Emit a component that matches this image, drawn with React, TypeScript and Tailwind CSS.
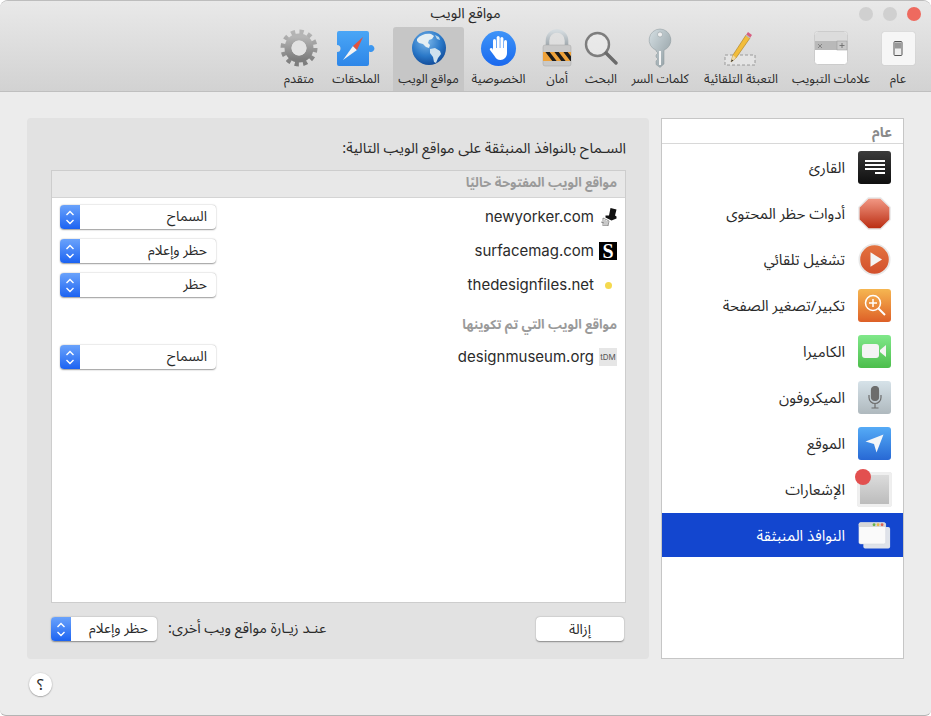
import type { ReactNode } from 'react';

const arabicFont = "font-['Noto_Sans_Arabic','DejaVu_Sans','Noto_Sans',sans-serif]";

function GeneralIcon() {
    return (
        <div className="flex h-[33px] w-[33px] items-center justify-center rounded-[2px] bg-[#f6f6f6] shadow-[0_0_1px_#aaa]">
            <svg width="10" height="15" viewBox="0 0 10 15">
                <rect x="1" y="0.5" width="8" height="14" rx="1" fill="#eee" stroke="#555" />
                <rect x="2" y="1.5" width="6" height="6" fill="#999" />
            </svg>
        </div>
    );
}

function TabsIcon() {
    return (
        <svg width="34" height="34" viewBox="0 0 34 34">
            <rect x="0.5" y="0.5" width="33" height="33" rx="3" fill="#fff" stroke="#ccc" />
            <path d="M1 4a3 3 0 0 1 3-3h26a3 3 0 0 1 3 3v7H1z" fill="#dcdcdc" />
            <rect x="1" y="10" width="32" height="9" fill="#b9b9b9" />
            <rect x="23" y="10" width="10" height="9" fill="#c9c9c9" stroke="#999" strokeWidth="0.5" />
            <path d="M4 13l4 4M8 13l-4 4" stroke="#777" strokeWidth="0.8" />
            <path d="M28 12v5M25.5 14.5h5" stroke="#666" strokeWidth="0.8" />
        </svg>
    );
}

function PencilIcon() {
    return (
        <svg width="34" height="38" viewBox="0 0 34 38">
            <rect x="1" y="26" width="30" height="10" fill="#e4e4e4" stroke="#888" strokeWidth="0.8" strokeDasharray="3 2" />
            <path d="M7 33l2-7L22 6l4 3L12 29z" fill="#f2bd3a" stroke="#a87a1c" strokeWidth="0.6" />
            <path d="M7 33l2-7 3 3z" fill="#eed9a8" />
            <path d="M7 33l.7-2.4 1.7 1z" fill="#333" />
            <path d="M22 6l2-3 4 3-2 3z" fill="#d85f80" />
            <path d="M22 6l4 3" stroke="#bbb" strokeWidth="1.5" />
        </svg>
    );
}

function KeyIcon() {
    return (
        <svg width="24" height="40" viewBox="0 0 24 40">
            <defs>
                <linearGradient id="keyFill" x1="0" y1="0" x2="1" y2="1">
                    <stop offset="0" stopColor="#d5dfe3" />
                    <stop offset="1" stopColor="#8d9a9f" />
                </linearGradient>
            </defs>
            <path d="M12 1a11 11 0 0 1 4 21.2V36l-4 3.5-4-3V33l2-2-2-2v-2l2-2-2-2v-.8A11 11 0 0 1 12 1z" fill="url(#keyFill)" stroke="#8b979b" strokeWidth="0.5" />
            <circle cx="12" cy="6.5" r="2.5" fill="#f0f0f0" stroke="#8b979b" strokeWidth="0.5" />
            <path d="M12 23v14" stroke="#f5f5f5" strokeWidth="2" />
        </svg>
    );
}

function SearchIcon() {
    return (
        <svg width="34" height="34" viewBox="0 0 34 34">
            <circle cx="13.5" cy="13.5" r="11.5" fill="#f0f0f0" fillOpacity="0.55" stroke="#7d7d7d" strokeWidth="2.4" />
            <path d="M22 22l10 10" stroke="#6b6b6b" strokeWidth="3.4" strokeLinecap="round" />
        </svg>
    );
}

function LockIcon() {
    return (
        <svg width="30" height="38" viewBox="0 0 30 38">
            <defs>
                <linearGradient id="shackle" x1="0" y1="0" x2="0" y2="1">
                    <stop offset="0" stopColor="#d4dbdf" />
                    <stop offset="1" stopColor="#9aa3a8" />
                </linearGradient>
                <clipPath id="lockBand">
                    <rect x="1" y="23" width="28" height="9" />
                </clipPath>
            </defs>
            <path d="M5.5 18v-6.5a9.5 9.5 0 0 1 19 0V18" fill="none" stroke="url(#shackle)" strokeWidth="3.6" />
            <rect x="1" y="16" width="28" height="21" rx="2" fill="#c9c9c9" stroke="#a5a5a5" strokeWidth="0.5" />
            <rect x="1" y="23" width="28" height="9" fill="#eea23a" />
            <g clipPath="url(#lockBand)" stroke="#1c1c1c" strokeWidth="3.4">
                <path d="M4 21l10 13M13 21l10 13M22 21l10 13" />
            </g>
        </svg>
    );
}

function HandIcon() {
    return (
        <div className="flex h-[35px] w-[35px] items-center justify-center rounded-full bg-linear-to-b from-[#3f94f8] to-[#1a68ee]">
            <svg width="22" height="26" viewBox="0 0 22 26" fill="#fff">
                <rect x="5" y="4" width="3" height="12" rx="1.5" />
                <rect x="8.7" y="1" width="3" height="14" rx="1.5" />
                <rect x="12.4" y="2" width="3" height="13" rx="1.5" />
                <rect x="16" y="5" width="3" height="11" rx="1.5" />
                <path d="M5 13h14v5c0 4-3 7-6.500 7-3 0-4.500-1.500-6-4l-4.500-6c-1-1.500 1-3 2.500-1.500L5 15.500z" />
            </svg>
        </div>
    );
}

function GlobeIcon() {
    return (
        <svg width="36" height="36" viewBox="0 0 36 36">
            <defs>
                <radialGradient id="globeFill" cx="0.42" cy="0.3" r="0.8">
                    <stop offset="0" stopColor="#7db8ea" />
                    <stop offset="0.55" stopColor="#2a78c8" />
                    <stop offset="1" stopColor="#0b3f8c" />
                </radialGradient>
            </defs>
            <circle cx="18" cy="18" r="17" fill="url(#globeFill)" />
            <path d="M6 9c3-4 9-6 14-5l3 2-2 3-3 1-1 3 2 2-1 3-3-1-3-3-4-1-2-2z" fill="#e4eef3" />
            <path d="M19 19l5-1 5 3 1 3-3 4-2 5-2-1-1-5-3-4z" fill="#cfe2ee" />
            <path d="M24 5l4 2 1 3-3-1z" fill="#bcd8ea" />
        </svg>
    );
}

function PuzzleIcon() {
    return (
        <svg width="39" height="35" viewBox="0 0 39 35">
            <defs>
                <linearGradient id="puzzleFill" x1="0" y1="0" x2="0" y2="1">
                    <stop offset="0" stopColor="#4aa6f6" />
                    <stop offset="1" stopColor="#2d86e8" />
                </linearGradient>
            </defs>
            <path d="M2 0h28a2 2 0 0 1 2 2v12.500a3.500 3.500 0 1 1 0 6V33a2 2 0 0 1-2 2H2a2 2 0 0 1-2-2V21a3.500 3.500 0 1 0 0-7V2a2 2 0 0 1 2-2z" fill="url(#puzzleFill)" />
            <path d="M6 29l10-14 4 4z" fill="#f4f4f4" />
            <path d="M26 6L16 15l4 4z" fill="#e2533f" />
        </svg>
    );
}

function GearIcon() {
    return (
        <svg width="38" height="38" viewBox="0 0 38 38">
            <defs>
                <linearGradient id="gearFill" x1="0" y1="0" x2="0" y2="1">
                    <stop offset="0" stopColor="#b5b5b5" />
                    <stop offset="1" stopColor="#7d7d7d" />
                </linearGradient>
            </defs>
            <circle cx="19" cy="19" r="15.500" fill="none" stroke="url(#gearFill)" strokeWidth="6" strokeDasharray="4.050 4.060" />
            <circle cx="19" cy="19" r="11" fill="none" stroke="url(#gearFill)" strokeWidth="7" />
            <circle cx="19" cy="19" r="7.500" fill="#e2e2e2" />
        </svg>
    );
}

const toolbarItems: { label: string; width: string; icon: ReactNode; active?: boolean }[] = [
    { label: 'عام', width: 'w-[38px]', icon: <GeneralIcon /> },
    { label: 'علامات التبويب', width: 'w-[96px]', icon: <TabsIcon /> },
    { label: 'التعبئة التلقائية', width: 'w-[84px]', icon: <PencilIcon /> },
    { label: 'كلمات السر', width: 'w-[78px]', icon: <KeyIcon /> },
    { label: 'البحث', width: 'w-[40px]', icon: <SearchIcon /> },
    { label: 'أمان', width: 'w-[48px]', icon: <LockIcon /> },
    { label: 'الخصوصية', width: 'w-[69px]', icon: <HandIcon /> },
    { label: 'مواقع الويب', width: 'w-[71px]', icon: <GlobeIcon />, active: true },
    { label: 'الملحقات', width: 'w-[74px]', icon: <PuzzleIcon /> },
    { label: 'متقدم', width: 'w-[40px]', icon: <GearIcon /> },
];

function Tile({ className, children }: { className: string; children: ReactNode }) {
    return <div className={`flex h-[33px] w-[33px] items-center justify-center rounded-[3px] ${className}`}>{children}</div>;
}

const sidebarItems: { label: string; icon: ReactNode; active?: boolean }[] = [
    {
        label: 'القارئ',
        icon: (
            <Tile className="bg-linear-to-b from-[#3c3c3c] to-[#0f0f0f]">
                <svg width="20" height="15" viewBox="0 0 20 15" fill="#fff">
                    <rect width="20" height="2" />
                    <rect y="4" width="20" height="2" />
                    <rect y="8" width="20" height="2" />
                    <rect x="10" y="12" width="10" height="2" />
                </svg>
            </Tile>
        ),
    },
    {
        label: 'أدوات حظر المحتوى',
        icon: (
            <svg width="35" height="35" viewBox="0 0 35 35">
                <defs>
                    <linearGradient id="stopFill" x1="0" y1="0" x2="0" y2="1">
                        <stop offset="0" stopColor="#f39a86" />
                        <stop offset="1" stopColor="#b92b10" />
                    </linearGradient>
                </defs>
                <path d="M11 1h13l10 10v13L24 34H11L1 24V11z" fill="url(#stopFill)" stroke="#e8e8e8" strokeWidth="1.500" />
            </svg>
        ),
    },
    {
        label: 'تشغيل تلقائي',
        icon: (
            <svg width="37" height="37" viewBox="0 0 37 37">
                <defs>
                    <linearGradient id="playFill" x1="0" y1="0" x2="0" y2="1">
                        <stop offset="0" stopColor="#e4733f" />
                        <stop offset="1" stopColor="#d24f2c" />
                    </linearGradient>
                </defs>
                <circle cx="18.500" cy="18.500" r="17" fill="url(#playFill)" stroke="#e8e8e8" strokeWidth="2" />
                <path d="M14 10.500l13 8-13 8z" fill="#f4f4f4" />
            </svg>
        ),
    },
    {
        label: 'تكبير/تصغير الصفحة',
        icon: (
            <Tile className="bg-linear-to-b from-[#f5b651] to-[#dd5f27]">
                <svg width="22" height="22" viewBox="0 0 22 22" fill="none" stroke="#fff" strokeWidth="1.500">
                    <circle cx="9" cy="9" r="7.500" />
                    <path d="M9 5v8M5 9h8" />
                    <path d="M14.500 14.500L21 21" strokeWidth="2" />
                </svg>
            </Tile>
        ),
    },
    {
        label: 'الكاميرا',
        icon: (
            <Tile className="bg-linear-to-b from-[#80e88a] to-[#4cbe4b]">
                <svg width="25" height="14" viewBox="0 0 25 14" fill="#f4f4f4">
                    <rect width="17" height="14" rx="3" />
                    <path d="M18 6l6-5v12l-6-5z" />
                </svg>
            </Tile>
        ),
    },
    {
        label: 'الميكروفون',
        icon: (
            <Tile className="bg-linear-to-b from-[#d6e2e9] to-[#afb9be]">
                <svg width="14" height="23" viewBox="0 0 14 23" fill="none" stroke="#6d6d6d" strokeWidth="1.200">
                    <rect x="3.500" y="0.500" width="7" height="14" rx="3.500" fill="#6d6d6d" />
                    <path d="M1 9v2.500a6 6 0 0 0 12 0V9M7 17.500V22M3.500 22h7" />
                </svg>
            </Tile>
        ),
    },
    {
        label: 'الموقع',
        icon: (
            <Tile className="bg-linear-to-b from-[#56abf6] to-[#2868d4]">
                <svg width="19" height="19" viewBox="0 0 19 19" fill="#f4f6f8">
                    <path d="M18.500 0.500L11.500 18.500 9 10 0.500 7.500z" />
                </svg>
            </Tile>
        ),
    },
    {
        label: 'الإشعارات',
        icon: (
            <div className="relative flex h-[33px] w-[33px] items-center justify-center border-2 border-[#efefef] bg-linear-to-b from-[#dcdcdc] to-[#bcbcbc] shadow-[0_0_1px_#999]">
                <span className="absolute top-[-6px] left-[-5px] h-4 w-4 rounded-full bg-[#e2504f]" />
            </div>
        ),
    },
    {
        label: 'النوافذ المنبثقة',
        active: true,
        icon: (
            <svg width="37" height="31" viewBox="0 0 37 31">
                <rect x="6" y="6" width="30" height="24" rx="2" fill="#dfe3ea" />
                <rect x="1" y="1" width="30" height="24" rx="2" fill="#fafafa" stroke="#cfd3da" strokeWidth="0.500" />
                <path d="M1 3a2 2 0 0 1 2-2h26a2 2 0 0 1 2 2v3H1z" fill="#d8d8d8" />
                <circle cx="18" cy="3.500" r="1.600" fill="#66b34e" />
                <circle cx="22.500" cy="3.500" r="1.600" fill="#e8b84a" />
                <circle cx="27" cy="3.500" r="1.600" fill="#de6252" />
            </svg>
        ),
    },
];

function Stepper() {
    return (
        <span className="flex h-full w-5 shrink-0 items-center justify-center rounded-l-[4px] bg-linear-to-b from-[#6aa2fb] to-[#1b62f1]">
            <svg width="10" height="17" viewBox="0 0 10 17" fill="none" stroke="#fff" strokeWidth="1.400">
                <path d="M1.500 6L5 2.500 8.500 6M1.500 11L5 14.500 8.500 11" />
            </svg>
        </span>
    );
}

function Select({ value, className }: { value: string; className: string }) {
    return (
        <div className={`flex h-6 items-center rounded-[4px] bg-white shadow-[0_0.5px_1.500px_rgba(0,0,0,0.4)] ${className}`}>
            <span className="flex-1 pr-[9px] text-[14px] leading-none text-[#2a2a2a]">{value}</span>
            <Stepper />
        </div>
    );
}

function SiteRow({ favicon, site, value }: { favicon: ReactNode; site: string; value: string }) {
    return (
        <div className="flex h-[34px] items-center justify-between pr-2 pl-[8px]">
            <div className="flex items-center gap-[5px]">
                <span className="flex h-[18px] w-[18px] items-center justify-center">{favicon}</span>
                <span dir="ltr" className="font-['Inter',sans-serif] text-[15px] text-[#2b2b2b]">{site}</span>
            </div>
            <Select value={value} className="w-[156px]" />
        </div>
    );
}

export default function App() {
    return (
        <div dir="rtl" className={`flex h-[716px] w-[931px] flex-col rounded-t-[8px] rounded-b-[6px] border-t border-b border-t-[#bdbdbd] border-b-[#b4b4b4] bg-[#ececec] ${arabicFont}`}>
            {/* Toolbar */}
            <div className="h-[91px] shrink-0 rounded-t-[8px] border-b border-[#bfbfbf] bg-linear-to-b from-[#e9e9e9] to-[#d2d2d2]">
                <div className="grid h-[26px] grid-cols-[1fr_auto_1fr] items-center">
                    <div className="flex items-center gap-[10px] pr-[10px]">
                        <span className="h-[14px] w-[14px] rounded-full bg-[#ee6a5f]" />
                        <span className="h-[14px] w-[14px] rounded-full bg-[#d0d0d0]" />
                        <span className="h-[14px] w-[14px] rounded-full bg-[#d0d0d0]" />
                    </div>
                    <span className="text-[14.500px] leading-[24px] whitespace-nowrap text-[#2a2a2a]">مواقع الويب</span>
                    <div />
                </div>
                <div className="flex pr-[14px]">
                    {toolbarItems.map((item) => (
                        <div
                            key={item.label}
                            className={`flex h-[64px] shrink-0 flex-col items-center ${item.width} ${item.active ? 'rounded-t-[3px] bg-[#c6c6c6]' : ''}`}
                        >
                            <div className="flex h-[42px] items-center justify-center">{item.icon}</div>
                            <span className="mt-[1px] h-[18px] text-[12.500px] leading-[18px] whitespace-nowrap text-[#2a2a2a]">{item.label}</span>
                        </div>
                    ))}
                </div>
            </div>

            {/* Content */}
            <div className="flex gap-3 pt-[26px] pr-[27px] pl-[27px]">
                <div className="flex h-[541px] w-[243px] shrink-0 flex-col border border-[#c6c6c6] bg-white">
                    <div className="flex h-[25px] shrink-0 items-center border-b border-[#d8d8d8] pt-[2px] pr-[11px] text-[14px] font-bold text-[#8a8a8a]">عام</div>
                    <div className="flex flex-col gap-[2px] pt-[1px]">
                        {sidebarItems.map((item) => (
                            <div
                                key={item.label}
                                className={`flex h-[44px] items-center gap-[13px] pr-3 ${item.active ? 'bg-[#1346cf] text-white' : 'text-[#2a2a2a]'}`}
                            >
                                <span className="flex w-[33px] shrink-0 items-center justify-center">{item.icon}</span>
                                <span className="pt-[2px] text-[15px] leading-none">{item.label}</span>
                            </div>
                        ))}
                    </div>
                </div>

                <div className="flex h-[541px] flex-1 flex-col rounded-[4px] bg-[#e2e2e2] pt-[21px] pr-[23px] pb-[16px] pl-[24px]">
                    <p className="h-[22px] text-[14.700px] leading-5 text-[#2a2a2a]">السـماح بالنوافذ المنبثقة على مواقع الويب التالية:</p>
                    <div className="mt-[9px] h-[433px] border border-[#cdcdcd] bg-white">
                        <div className="flex h-[27px] items-center border-b border-[#d4d4d4] bg-[#e8e8e8] pr-2 text-[13px] font-bold text-[#9a9a9a]">
                            مواقع الويب المفتوحة حاليًا
                        </div>
                        <div className="pt-[2px]">
                            <SiteRow
                                site="newyorker.com"
                                value="السماح"
                                favicon={
                                    <svg width="18" height="18" viewBox="0 0 18 18">
                                        <path d="M11.500 0l6 1.500-1.500 6 1.500 1v2l-5 2-6-3 0-2 3.500 0z" fill="#111" />
                                        <path d="M4 10l6 3-1 5H4zM2 14l3 1M6 12v6M8 13v5" fill="none" stroke="#777" strokeWidth="0.800" />
                                    </svg>
                                }
                            />
                            <SiteRow
                                site="surfacemag.com"
                                value="حظر وإعلام"
                                favicon={
                                    <span className="flex h-[18px] w-[18px] items-center justify-center bg-black font-['Liberation_Serif',serif] text-[20px] leading-none font-bold text-white">S</span>
                                }
                            />
                            <SiteRow
                                site="thedesignfiles.net"
                                value="حظر"
                                favicon={<span className="h-[7px] w-[7px] rounded-full bg-[#f5d94e]" />}
                            />
                            <div className="flex h-[38px] items-center pt-[10px] pr-2 text-[13px] font-bold text-[#9a9a9a]">مواقع الويب التي تم تكوينها</div>
                            <SiteRow
                                site="designmuseum.org"
                                value="السماح"
                                favicon={
                                    <span dir="ltr" className="flex h-[18px] w-[18px] items-center justify-center bg-[#e6e6e6] font-['Inter',sans-serif] text-[8px] text-[#555]">tDM</span>
                                }
                            />
                        </div>
                    </div>
                    <div className="mt-[14px] flex items-center">
                        <button className="mr-[2px] flex h-6 w-[88px] items-center justify-center rounded-[4px] bg-white text-[14px] text-[#2a2a2a] shadow-[0_0.5px_1.500px_rgba(0,0,0,0.4)]">إزالة</button>
                        <span className="mr-auto ml-[11px] text-[14.500px] text-[#2a2a2a]">عنـد زيـارة مواقع ويب أخرى:</span>
                        <Select value="حظر وإعلام" className="w-[106px]" />
                    </div>
                </div>
            </div>

            {/* Help */}
            <div className="flex justify-end pt-[14px] pl-[29px]">
                <button className="flex h-[23px] w-[23px] items-center justify-center rounded-full bg-white text-[16px] text-[#2a2a2a] shadow-[0_0.5px_1.500px_rgba(0,0,0,0.45)]">؟</button>
            </div>
        </div>
    );
}
